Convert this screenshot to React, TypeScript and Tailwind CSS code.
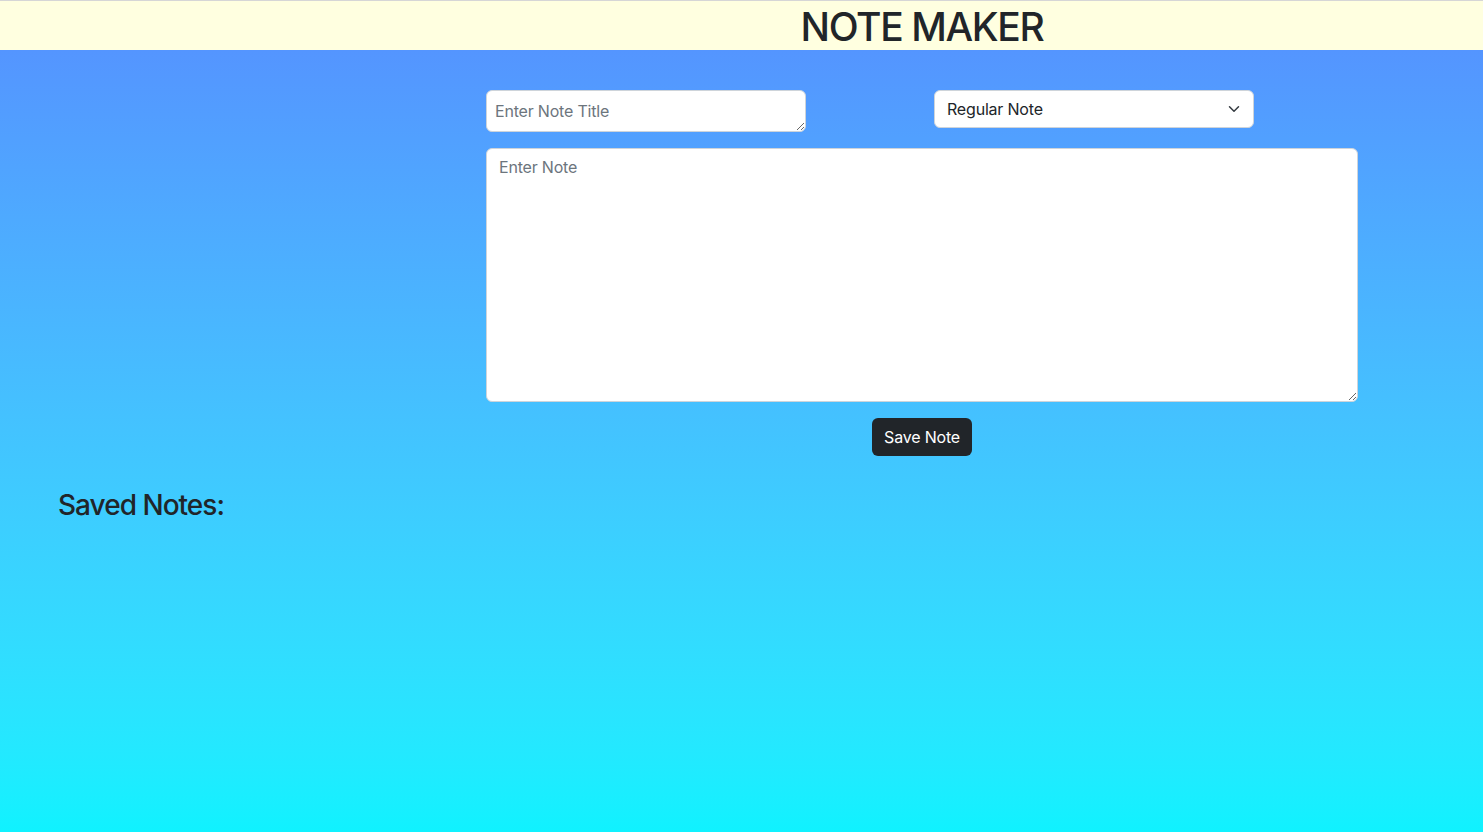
import React, { useState } from 'react';

const font = { fontFamily: 'Inter, "Noto Sans", "Liberation Sans", sans-serif' };

const App: React.FC = () => {
  const [title, setTitle] = useState('');
  const [kind, setKind] = useState('regular');
  const [note, setNote] = useState('');

  return (
    <div className="min-h-screen flex flex-col text-[#212529] tracking-[-0.012em]" style={font}>
      {/* Header */}
      <header className="bg-[#ffffe0] border-t border-[#d6d6d6] h-[50px] overflow-hidden">
        <div className="ml-[486px] w-[872px] text-center pt-[3px]">
          <h1 className="text-[39px] leading-[45px] font-medium tracking-[-0.035em]">NOTE MAKER</h1>
        </div>
      </header>

      {/* Main */}
      <main className="flex-1 bg-gradient-to-b from-[#5495ff] to-[#0ff2ff] pt-[40px]">
        <div className="ml-[486px] w-[872px]">
          <div className="flex items-start gap-[128px]">
            <textarea
              rows={1}
              value={title}
              onChange={(e) => setTitle(e.target.value)}
              placeholder="Enter Note Title"
              className="block w-[320px] h-[42px] px-2 py-2 text-base leading-6 bg-white border border-[#ced4da] rounded-md placeholder:text-[#6c757d] outline-none"
            />
            <div className="relative w-[320px]">
              <select
                value={kind}
                onChange={(e) => setKind(e.target.value)}
                className="appearance-none block w-full h-[38px] pl-3 pr-9 text-base leading-6 bg-white border border-[#ced4da] rounded-md outline-none"
              >
                <option value="regular">Regular Note</option>
                <option value="important">Important Note</option>
              </select>
              <svg
                className="absolute right-3 top-[13px] pointer-events-none"
                width="16"
                height="12"
                viewBox="0 0 16 16"
                fill="none"
                stroke="#343a40"
                strokeWidth="2"
                strokeLinecap="round"
                strokeLinejoin="round"
              >
                <path d="m2 5 6 6 6-6" />
              </svg>
            </div>
          </div>

          <textarea
            value={note}
            onChange={(e) => setNote(e.target.value)}
            placeholder="Enter Note"
            className="block mt-4 w-full h-[254px] px-3 py-1.5 text-base leading-6 bg-white border border-[#ced4da] rounded-md placeholder:text-[#6c757d] outline-none"
          />

          <div className="flex justify-center mt-4">
            <button className="h-[38px] w-[100px] bg-[#212529] text-white text-base rounded-md">
              Save Note
            </button>
          </div>
        </div>

        <h3 className="ml-[58px] mt-[32px] text-[28px] leading-[34px] font-medium tracking-[-0.035em]">
          Saved Notes:
        </h3>
      </main>
    </div>
  );
};

export default App;
